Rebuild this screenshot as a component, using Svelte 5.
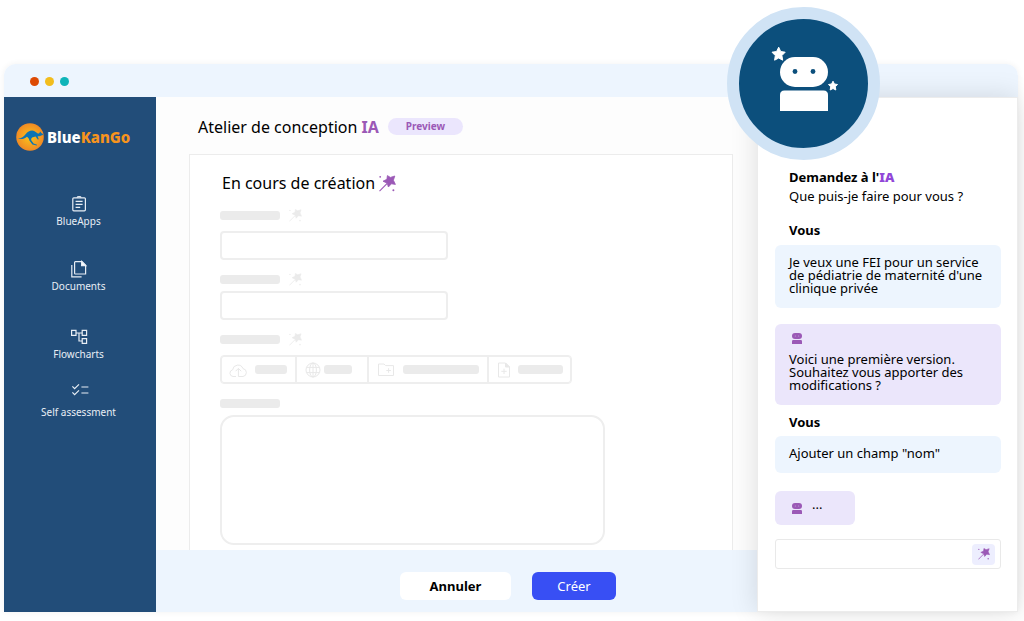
<script lang="ts">
  type Tool = { id: string; label: string; width: number; bar: number };
  type Field = { id: string; label: string; kind: "text" | "tools" | "area"; magic: boolean };

  const navItems = [
    { id: "apps", label: "BlueApps" },
    { id: "documents", label: "Documents" },
    { id: "flowcharts", label: "Flowcharts" },
    { id: "assessment", label: "Self assessment" },
  ];

  const fields: Field[] = [
    { id: "field-1", label: "Champ 1", kind: "text", magic: true },
    { id: "field-2", label: "Champ 2", kind: "text", magic: true },
    { id: "field-3", label: "Pièces jointes", kind: "tools", magic: true },
    { id: "field-4", label: "Description", kind: "area", magic: false },
  ];

  const tools: Tool[] = [
    { id: "upload", label: "Importer", width: 74, bar: 32 },
    { id: "web", label: "Lien web", width: 72, bar: 28 },
    { id: "folder", label: "Ajouter un dossier", width: 120, bar: 76 },
    { id: "file", label: "Ajouter un fichier", width: 84, bar: 45 },
  ];

  let message = $state("");
</script>

{#snippet wand(size: number)}
  <svg class="wand" width={size} height={size} viewBox="0 0 17 17" aria-hidden="true">
    <path
      fill="currentColor"
      stroke="currentColor"
      stroke-width="0.8"
      stroke-linejoin="round"
      d="M8.4.6 11.4 2.4 15.8 1 14.4 5.2 16.4 9.4 12.4 8.8 9.4 12 8.2 8.200 4 6.200 7.900 4.300Z"
    />
    <path d="M8.200 8.400.5 16.200" stroke="currentColor" stroke-width="1.1" fill="none" />
    <circle cx="1.2" cy="1.8" r="0.9" fill="currentColor" />
    <circle cx="14.4" cy="15.2" r="1" fill="currentColor" />
  </svg>
{/snippet}

{#snippet bot()}
  <svg class="bot" width="10" height="11" viewBox="0 0 10 11" aria-hidden="true">
    <rect width="10" height="6" rx="3" fill="#9b59b6" />
    <path d="M0 11V8.2Q0 7 1.2 7H8.8Q10 7 10 8.2V11Z" fill="#9b59b6" />
    <circle cx="3.2" cy="3" r="0.4" fill="#ece7fc" />
    <circle cx="6.8" cy="3" r="0.4" fill="#ece7fc" />
  </svg>
{/snippet}

<div class="page">
  <div class="window">
    <div class="titlebar">
      <span class="dot red"></span>
      <span class="dot yellow"></span>
      <span class="dot teal"></span>
    </div>

    <div class="body">
      <aside class="sidebar">
        <a class="logo" href="/">
          <svg width="28" height="28" viewBox="0 0 28 28" aria-hidden="true">
            <defs>
              <radialGradient id="sun">
                <stop offset="0" stop-color="#fbc51b" />
                <stop offset="1" stop-color="#f08a24" />
              </radialGradient>
            </defs>
            <circle cx="14" cy="14" r="13.8" fill="url(#sun)" />
            <path
              fill="#0c74b4"
              d="M2 15.800C5.500 15.600 7.800 13.600 9.800 11 12 8.200 15.600 6.600 18.600 8.200 20 9 21.400 10.600 23 10.600L24.400 8.400 25.200 10C26.200 10.200 27 11 27.200 11.800L25.200 12.600C24.200 13.600 22.600 13.400 21.600 13.200L22.800 16.200 21.800 16.600 19.600 13.400C18.400 14 17 14 16.200 14.400 15 15.400 15 16.200 15.400 17.400L17.600 20.400 21 21.800 20.800 22.600 16.400 21.400 13.400 17.400C13 16 12.200 14.600 11 13.800 8.600 15.800 5.400 16.600 2 15.800Z"
            />
          </svg>
          <span class="logo-text">Blue<b>KanGo</b></span>
        </a>

        <nav>
          {#each navItems as item (item.id)}
            <a class="nav-item {item.id}" href="/{item.id}">
              <svg
                width="20"
                height="20"
                viewBox="0 0 20 20"
                fill="none"
                stroke="#e8eef5"
                stroke-width="1.2"
                aria-hidden="true"
              >
                {#if item.id === "apps"}
                  <rect x="3.8" y="3.8" width="12.6" height="13" rx="1" />
                  <path d="M8 3.6C8.4 2.2 11.8 2.2 12.2 3.6M6.6 7.4H13.6M6.6 10.4H13.6M6.6 13.4H11.2" />
                {:else if item.id === "documents"}
                  <path d="M6.4 2.6H13L16.6 6.2V15H6.4Q5.6 15 5.6 14.2V3.4Q5.6 2.6 6.4 2.6Z" />
                  <path d="M12.6 2.4V6.6H16.8Z" fill="#fff" />
                  <path d="M2.8 6V17.8H12.6" />
                {:else if item.id === "flowcharts"}
                  <path d="M2.6 3.4H7V8.4H2.6ZM13.2 3.4H17.6V8.4H13.2ZM13.2 11.6H17.6V16.4H13.2Z" />
                  <path d="M7 6H13.2M10 6V14H13.2" />
                {:else}
                  <path d="M3.4 6.4 5.6 8.6 10 4.4M3.4 12.4 5.6 14.6 10 10.4M12.4 7H19.4M12.4 13H19.4" />
                {/if}
              </svg>
              <span>{item.label}</span>
            </a>
          {/each}
        </nav>
      </aside>

      <main>
        <header>
          <h1>Atelier de conception <b>IA</b></h1>
          <span class="tag">Preview</span>
        </header>

        <section class="card">
          <h2>En cours de création {@render wand(17)}</h2>

          {#each fields as field (field.id)}
            <div class="field">
              <div class="label-row">
                <label class="skeleton" for={field.id} aria-label={field.label}></label>
                {#if field.magic}{@render wand(13)}{/if}
              </div>
              {#if field.kind === "text"}
                <input id={field.id} type="text" />
              {:else if field.kind === "area"}
                <textarea id={field.id}></textarea>
              {:else}
                <div class="tools" id={field.id}>
                  {#each tools as tool (tool.id)}
                    <button type="button" aria-label={tool.label} style="width: {tool.width}px">
                      <svg
                        width="18"
                        height="16"
                        viewBox="0 0 18 16"
                        fill="none"
                        stroke="#e8e8e8"
                        aria-hidden="true"
                      >
                        {#if tool.id === "upload"}
                          <path d="M7 14.5H4A3.4 3.4 0 0 1 3.6 7.8 5.4 5.4 0 0 1 14 6.6 4 4 0 0 1 14 14.5H9.4V6.6M6.6 9.2 9.4 6.4 12.2 9.2" />
                        {:else if tool.id === "web"}
                          <circle cx="9" cy="8" r="7" />
                          <ellipse cx="9" cy="8" rx="3.4" ry="7" />
                          <path d="M2.6 5.4H15.4M2.6 10.6H15.4M9 1V15" />
                        {:else if tool.id === "folder"}
                          <path d="M1.5 2H7L8.6 3.6H16.5V13.5H1.5ZM11.6 6.2V10.8M9.3 8.5H13.9" />
                        {:else}
                          <path d="M1.500 1H8.500L12.500 5V15H1.500ZM7 6.600V12M4.300 9.300H9.700" />
                          <path d="M8.500 1V5H12.500Z" fill="#e8e8e8" />
                        {/if}
                      </svg>
                      <span class="skeleton" style="width: {tool.bar}px"></span>
                    </button>
                  {/each}
                </div>
              {/if}
            </div>
          {/each}
        </section>

        <footer>
          <button type="button" class="cancel">Annuler</button>
          <button type="button" class="create">Créer</button>
        </footer>
      </main>

      <aside class="chat">
        <div class="badge">
          <svg width="130" height="130" viewBox="0 0 130 130" aria-hidden="true">
            <rect x="41" y="38" width="48" height="30" rx="15" fill="#fff" />
            <path d="M41 92V76Q41 71.500 45.500 71.500H84.500Q89 71.500 89 76V92Z" fill="#fff" />
            <circle cx="56" cy="52.500" r="2.400" fill="#0c4f7c" />
            <circle cx="74" cy="52.500" r="2.400" fill="#0c4f7c" />
            <path
              fill="#fff"
              stroke="#fff"
              stroke-linejoin="round"
              d="M39.700 28.200 41.700 32.500 46.200 33.200 42.900 36.600 43.700 41.200 39.700 39 35.600 41.200 36.300 36.600 33 33.200 37.600 32.500Z"
            />
            <path
              fill="#fff"
              stroke="#fff"
              stroke-linejoin="round"
              d="M94 62.200 95.400 65 98.500 65.500 96.300 67.800 96.800 71 94 69.500 91.200 71 91.700 67.800 89.500 65.500 92.600 65Z"
            />
          </svg>
        </div>

        <h3>Demandez à l'<b>IA</b></h3>
        <p class="intro">Que puis-je faire pour vous ?</p>

        <h4>Vous</h4>
        <div class="bubble">Je veux une FEI pour un service de pédiatrie de maternité d'une clinique privée</div>

        <div class="bubble reply">
          {@render bot()}
          <p>Voici une première version. Souhaitez vous apporter des modifications ?</p>
        </div>

        <h4 class="next">Vous</h4>
        <div class="bubble">Ajouter un champ "nom"</div>

        <div class="bubble typing">{@render bot()} <span>···</span></div>

        <form class="composer">
          <input type="text" aria-label="Votre message" bind:value={message} />
          <button type="button" aria-label="Envoyer">{@render wand(12)}</button>
        </form>
      </aside>
    </div>
  </div>
</div>

<style>
  :global(body) {
    background: #fff;
    font-family: "Noto Sans", sans-serif;
    color: #000;
  }

  .page * {
    box-sizing: border-box;
  }

  .page {
    padding: 64px 6px 9px 4px;
  }

  .window {
    border-radius: 12px 12px 0 0;
    box-shadow: 0 0 6px rgba(0, 0, 0, 0.06);
  }

  .titlebar {
    display: flex;
    align-items: center;
    gap: 6px;
    height: 33px;
    padding: 2px 26px 0;
    border-radius: 12px 12px 0 0;
    background: #edf5fe;
  }

  .dot {
    width: 9px;
    height: 9px;
    border-radius: 50%;
  }

  .red {
    background: #dd4a04;
  }

  .yellow {
    background: #f2bd1d;
  }

  .teal {
    background: #0fb4b9;
  }

  .body {
    display: flex;
  }

  h1,
  h2,
  h3,
  h4,
  p {
    margin: 0;
  }

  button,
  input,
  textarea {
    padding: 0;
    border: 0;
    font-family: inherit;
    background: none;
  }

  svg {
    flex: none;
  }

  .sidebar {
    flex: none;
    width: 152px;
    background: #224d79;
  }

  .logo {
    display: flex;
    align-items: center;
    gap: 3px;
    padding: 26px 0 0 12px;
    text-decoration: none;
  }

  .logo-text {
    font-size: 15px;
    font-weight: 800;
    line-height: 20px;
    color: #fff;
  }

  .logo-text b {
    font-weight: 800;
    color: #f7941d;
  }

  nav {
    display: flex;
    flex-direction: column;
    margin-top: 43px;
  }

  .nav-item {
    display: flex;
    flex-direction: column;
    align-items: center;
    padding-right: 3px;
    margin-bottom: 31px;
    font-size: 10px;
    line-height: 14px;
    color: #e8eef5;
    text-decoration: none;
  }

  .flowcharts {
    margin-top: 3px;
    margin-bottom: 19px;
  }

  .assessment {
    gap: 5px;
  }

  main {
    display: flex;
    flex: 1;
    flex-direction: column;
    min-width: 0;
    background: #fdfdfd;
  }

  header {
    display: flex;
    align-items: center;
    gap: 9px;
    height: 57px;
    padding: 2px 0 0 42px;
  }

  h1,
  h2 {
    font-size: 16px;
    font-weight: 400;
    line-height: 26px;
  }

  h1 b {
    color: #9b59b6;
  }

  .tag {
    width: 75px;
    border-radius: 9px;
    font-size: 10px;
    font-weight: 700;
    line-height: 17px;
    text-align: center;
    color: #9b59b6;
    background: #ebe6fd;
  }

  .card {
    display: flex;
    flex: 1;
    flex-direction: column;
    gap: 11px;
    margin: 0 24px 0 33px;
    padding: 15px 30px 5px;
    border: 1px solid #ececec;
    border-bottom: 0;
    background: #fff;
  }

  h2 {
    display: flex;
    align-items: center;
    gap: 4px;
    padding-left: 2px;
  }

  h2 .wand {
    color: #9b59b6;
  }

  .field {
    display: flex;
    flex-direction: column;
    gap: 4px;
  }

  .field:nth-of-type(odd) {
    gap: 8px;
  }

  .label-row {
    display: flex;
    align-items: center;
    gap: 9px;
    height: 16px;
    color: #ebebeb;
  }

  .skeleton {
    width: 60px;
    height: 9px;
    border-radius: 3px;
    background: #ebebeb;
  }

  .field input {
    width: 228px;
    height: 29px;
    border: 2px solid #eeeeee;
    border-radius: 4px;
  }

  .field textarea {
    width: 385px;
    height: 130px;
    border: 2px solid #eeeeee;
    border-radius: 14px;
    resize: none;
  }

  .tools {
    display: flex;
    align-self: flex-start;
    height: 29px;
    border: 1px solid #eeeeee;
    border-radius: 4px;
    box-shadow: inset 0 0 0 1px #eeeeee;
  }

  .tools button {
    display: flex;
    align-items: center;
    justify-content: space-between;
    padding: 0 8px;
  }

  .tools button + button {
    border-left: 2px solid #eeeeee;
  }

  .tools button:nth-child(2) {
    padding-right: 15px;
    padding-left: 7px;
  }

  footer {
    display: flex;
    align-items: center;
    justify-content: center;
    gap: 21px;
    height: 62px;
    padding: 10px 0 0 103px;
    background: #edf5fe;
  }

  footer button {
    width: 84px;
    height: 28px;
    border-radius: 6px;
    font-size: 13px;
    color: #fff;
    background: #384ff4;
  }

  footer .cancel {
    width: 111px;
    font-weight: 700;
    color: #000;
    background: #fff;
  }

  .chat {
    position: relative;
    flex: none;
    width: 261px;
    padding: 70px 16px 42px 17px;
    border: 1px solid #ececec;
    font-size: 13px;
    line-height: 13px;
    background: #fff;
    box-shadow: 0 0 26px rgba(0, 0, 0, 0.13);
    clip-path: inset(-100px -6px -9px -32px);
  }

  .badge {
    position: absolute;
    top: -91px;
    left: -31px;
    display: grid;
    place-items: center;
    width: 153px;
    height: 153px;
    border: 12px solid #d0e3f5;
    border-radius: 50%;
    background: #0c4f7c;
  }

  h3,
  h4,
  .intro {
    padding-left: 14px;
    font-size: 13px;
    line-height: 18px;
  }

  .intro {
    margin-top: 1px;
  }

  h3 b {
    color: #9146d8;
  }

  h4 {
    margin: 16px 0 6px;
  }

  .bubble {
    padding: 11px 14px 13px;
    border-radius: 6px;
    background: #edf5fe;
  }

  .reply {
    margin-top: 16px;
    padding-top: 9px;
    background: #ebe6fb;
  }

  .bot {
    display: block;
    margin-left: 3px;
  }

  .reply p {
    margin-top: 9px;
  }

  .next {
    margin: 8px 0 5px;
  }

  .typing {
    display: flex;
    align-items: center;
    gap: 10px;
    width: 80px;
    height: 34px;
    margin: 18px 0 14px;
    padding: 12px 14px;
    background: #ebe6fb;
  }

  .composer {
    display: flex;
    align-items: center;
    height: 30px;
    padding-right: 5px;
    border: 1px solid #e9e9e9;
    border-radius: 3px;
  }

  .composer input {
    flex: 1;
    min-width: 0;
    height: 26px;
    padding-left: 12px;
    outline: none;
  }

  .composer button {
    display: grid;
    place-items: center;
    width: 23px;
    height: 21px;
    border-radius: 4px;
    color: #9b59b6;
    background: #edeefe;
  }
</style>
